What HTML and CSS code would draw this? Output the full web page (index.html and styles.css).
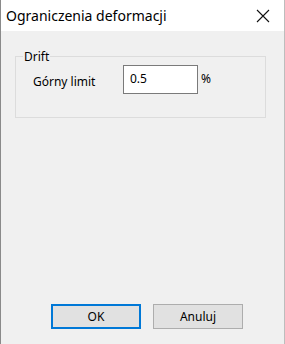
FILE: index.html
```html
<!DOCTYPE html>
<html>
<head>
<meta charset="utf-8">
<link rel="stylesheet" href="styles.css">
</head>
<body>
<div class="window">
  <div class="titlebar">
    <span class="title">Ograniczenia deformacji</span>
    <svg class="close" width="14" height="14" viewBox="0 0 14 14"><path d="M1 1 L13 13 M13 1 L1 13" stroke="#111" stroke-width="1.1" fill="none"/></svg>
  </div>
  <div class="body">
    <fieldset class="group">
      <legend>Drift</legend>
      <div class="row">
        <span class="label">Górny limit</span>
        <div class="input">0.5</div>
        <span class="unit">%</span>
      </div>
    </fieldset>
    <div class="buttons">
      <button class="btn default">OK</button>
      <button class="btn">Anuluj</button>
    </div>
  </div>
</div>
</body>
</html>
```
FILE: styles.css
```css
html, body { margin: 0; padding: 0; }
body { width: 285px; height: 344px; overflow: hidden; font-family: "Noto Sans", "Open Sans", sans-serif; }
.window { width: 285px; height: 344px; box-sizing: border-box; display: flex; flex-direction: column; border-left: 1px solid #8a8a8a; border-right: 1px solid #bdbdbd; background: #f0f0f0; }
.titlebar { height: 31px; background: #fff; display: flex; align-items: center; justify-content: space-between; padding: 0 14px 0 5px; flex-shrink: 0; }
.title { font-size: 14px; color: #000; letter-spacing: 0; }
.close { display: block; }
.body { flex: 1; display: flex; flex-direction: column; padding: 0 18px 0 14px; position: relative; }
.group { margin: 17px 0 0 0; padding: 0; border: 1px solid #dcdcdc; height: 70px; box-sizing: border-box; }
.group legend { font-size: 12px; padding: 0 1px; margin-left: 7px; color: #000; }
.row { display: flex; align-items: flex-start; margin-top: 0; }
.label { font-size: 12px; margin-left: 17px; width: 90px; margin-top: 8px; }
.input { width: 75px; height: 29px; box-sizing: border-box; background: #fff; border: 1px solid #7a7a7a; font-size: 12px; padding: 4px 0 0 6px; }
.unit { font-size: 12px; margin-left: 3px; margin-top: 5px; }
.buttons { margin-top: auto; margin-bottom: 15px; display: flex; gap: 12px; padding-left: 36px; }
.btn { width: 90px; height: 25px; font-family: inherit; font-size: 12px; background: #e1e1e1; border: 1px solid #adadad; padding: 0; color: #000; }
.btn.default { border: 2px solid #0078d7; }
```
